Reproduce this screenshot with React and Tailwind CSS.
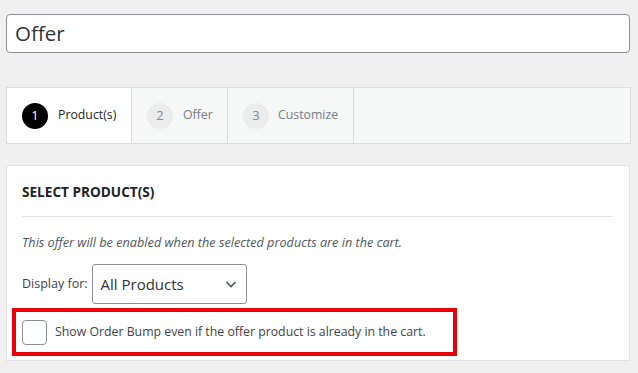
import React from "react";

const font = { fontFamily: '"Open Sans", "Noto Sans", sans-serif' };

export default function App() {
  return (
    <div className="w-[638px] h-[373px] bg-[#f0f0f1] overflow-hidden" style={font}>
      <div className="pt-[14px] pl-[6px] pr-[8px]">
        <div className="h-[39px] border border-[#8c8f94] rounded-[4px] bg-white flex items-center pl-[8px] text-[20.5px] text-[#2c3338]">
          Offer
        </div>
      </div>
      <div className="mt-[34px] ml-[6px] mr-[7px] h-[57px] border border-[#dcdcde] bg-[#f6f7f7] flex">
        <div className="w-[125px] bg-white border-r border-[#dcdcde] flex items-center pl-[15px] gap-[10px]">
          <span className="w-[26px] h-[26px] rounded-full bg-black text-white text-[13px] flex items-center justify-center">1</span>
          <span className="text-[12.3px] text-[#1d2327]">Product(s)</span>
        </div>
        <div className="w-[96px] border-r border-[#dcdcde] flex items-center pl-[15px] gap-[10px]">
          <span className="w-[26px] h-[26px] rounded-full bg-[#ececec] text-[#8a8a8a] text-[13px] flex items-center justify-center">2</span>
          <span className="text-[12.3px] text-[#787c82]">Offer</span>
        </div>
        <div className="w-[126px] border-r border-[#dcdcde] flex items-center pl-[15px] gap-[9px]">
          <span className="w-[26px] h-[26px] rounded-full bg-[#ececec] text-[#8a8a8a] text-[13px] flex items-center justify-center">3</span>
          <span className="text-[12.3px] text-[#787c82]">Customize</span>
        </div>
      </div>
      <div className="mt-[21px] ml-[6px] mr-[8px] h-[196px] border border-[#e2e2e4] bg-white px-[15px]">
        <div className="pt-[17px] pb-[15px] border-b border-[#e5e5e5] mr-[1px] text-[13.6px] font-bold text-[#1d2327] leading-[18px]">
          SELECT PRODUCT(S)
        </div>
        <div className="mt-[16px] text-[12.7px] italic text-[#50575e] leading-[18px]">
          This offer will be enabled when the selected products are in the cart.
        </div>
        <div className="mt-[13px] flex items-center gap-[4px]">
          <span className="text-[12.5px] text-[#3c434a]">Display for:</span>
          <div className="w-[155px] h-[40px] border border-[#8c8f94] rounded-[3px] flex items-center justify-between pl-[8px] pr-[8px]">
            <span className="text-[15px] text-[#2c3338]">All Products</span>
            <svg width="14" height="14" viewBox="0 0 14 14" fill="none" stroke="#50575e" strokeWidth="1.6">
              <path d="M2.5 5l4.5 4.5 4.5-4.5" />
            </svg>
          </div>
        </div>
        <div className="mt-[4px] -ml-[10px] w-[445px] h-[48px] border-[4px] border-[#e8000b] flex items-center pl-[6px] gap-[8px]">
          <span className="w-[25px] h-[25px] border border-[#8c8f94] rounded-[4px] bg-white" />
          <span className="text-[12.3px] text-[#3c434a]">Show Order Bump even if the offer product is already in the cart.</span>
        </div>
      </div>
    </div>
  );
}
